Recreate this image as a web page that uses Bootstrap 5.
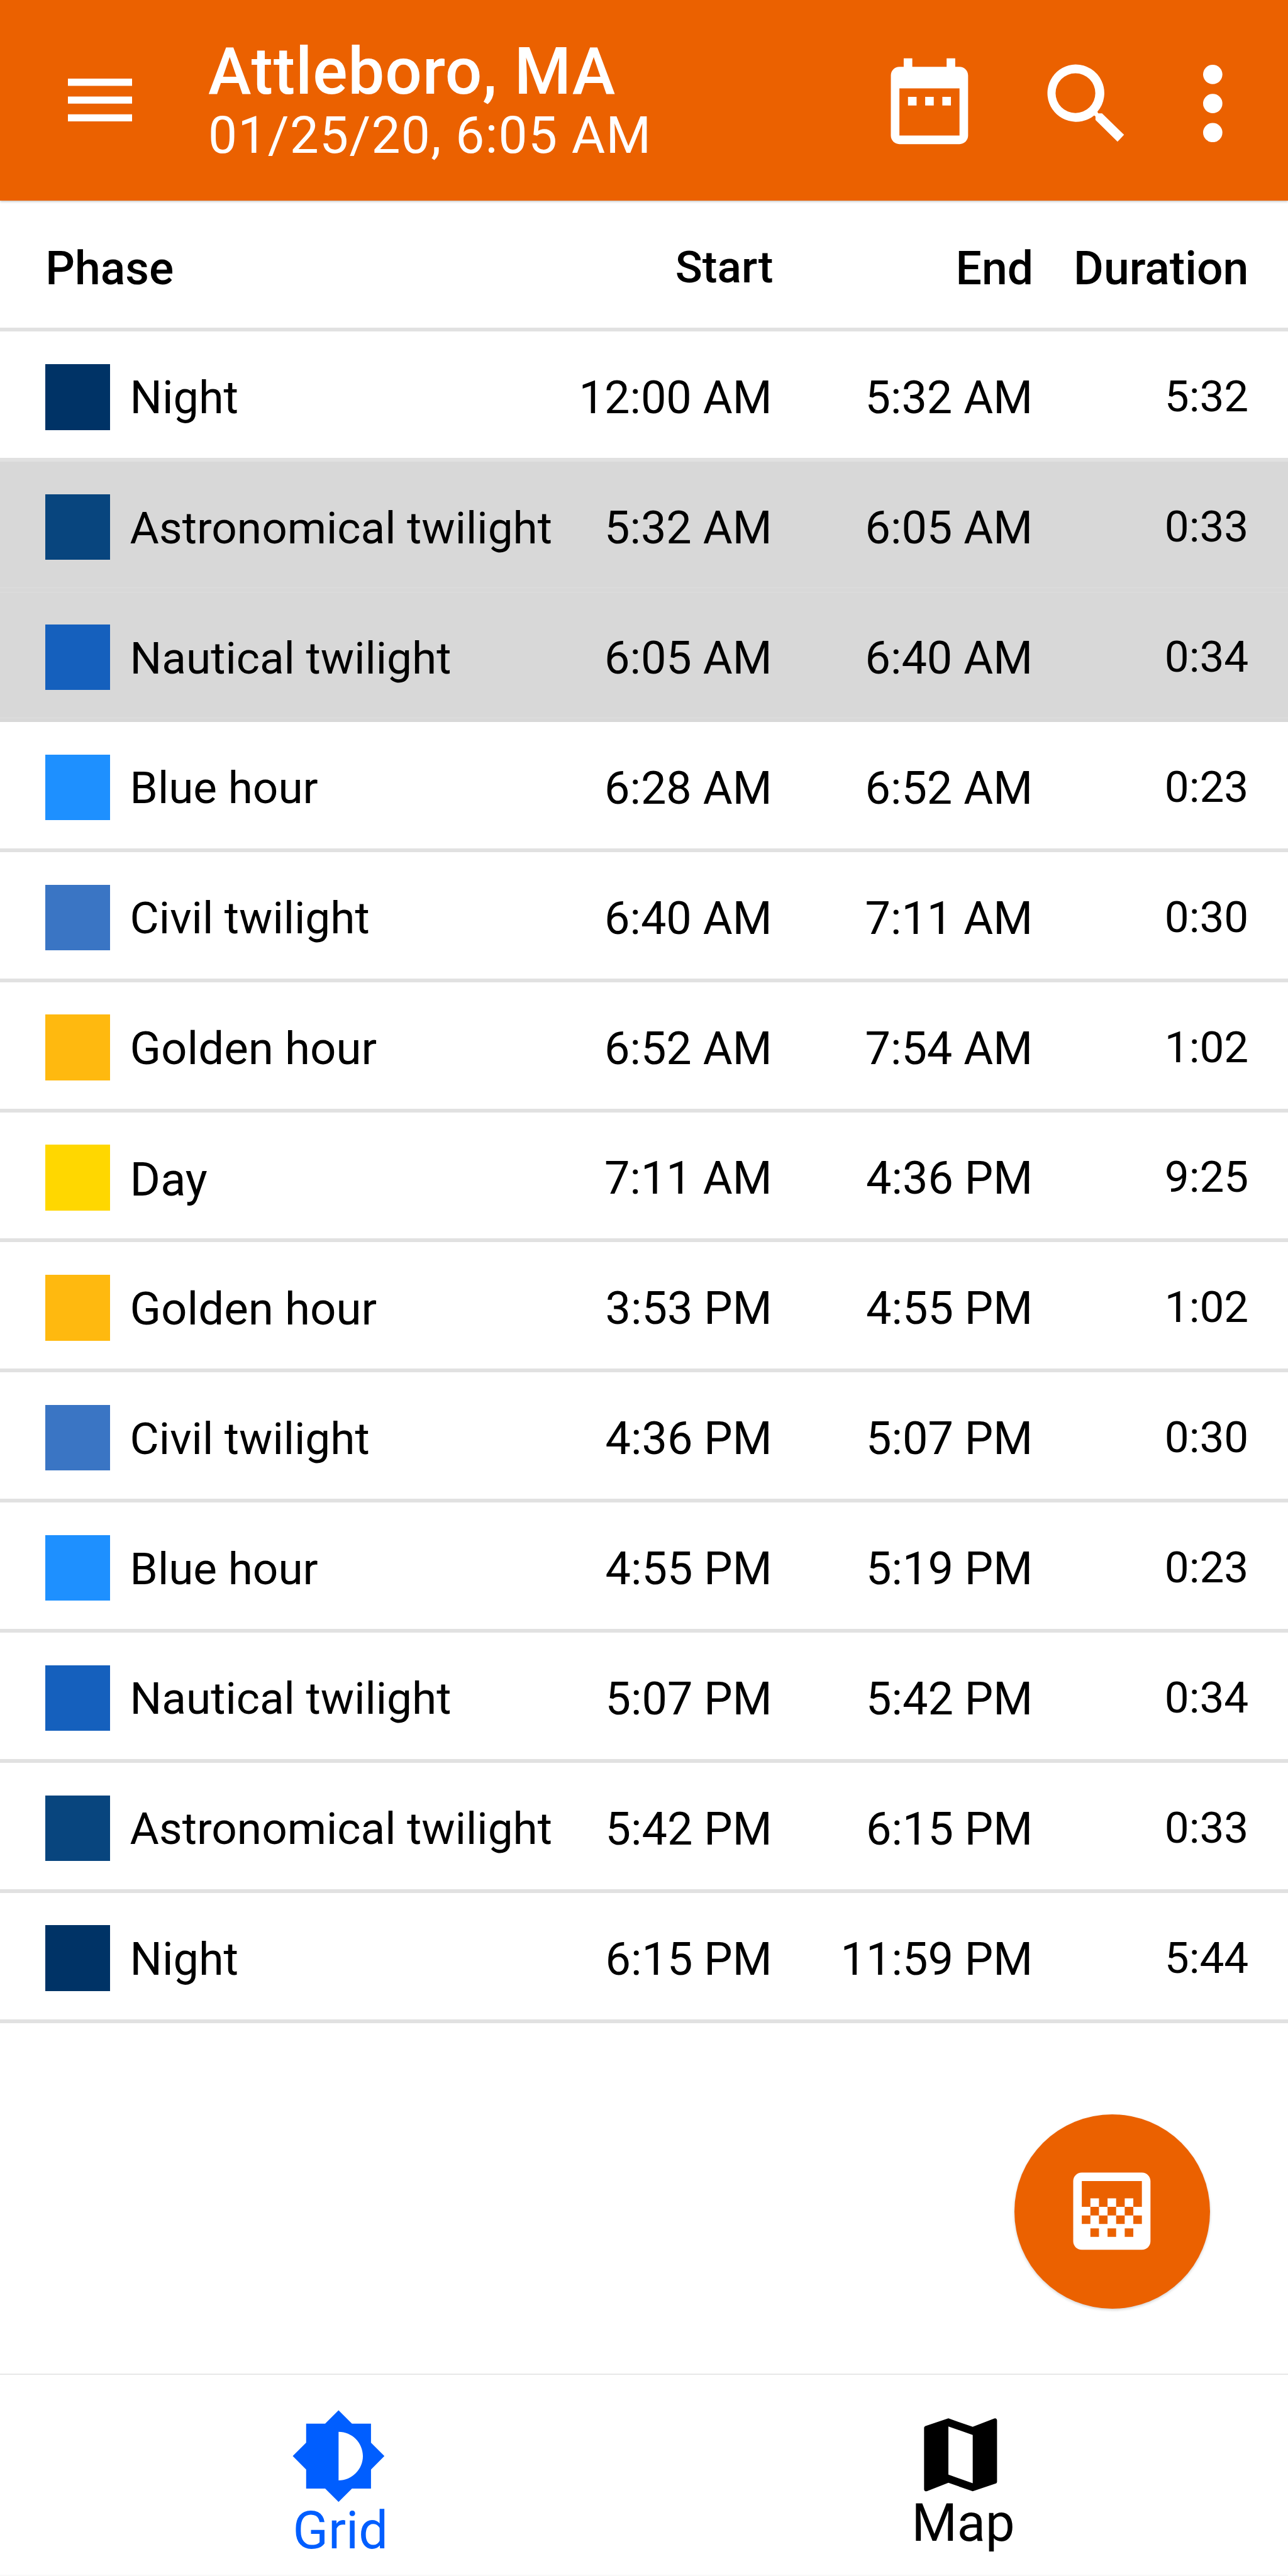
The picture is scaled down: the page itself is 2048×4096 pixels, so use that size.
<!DOCTYPE html>
<html lang="en">
<head>
<meta charset="utf-8">
<meta name="viewport" content="width=device-width, initial-scale=1">
<title>Attleboro, MA</title>
<link href="https://cdn.jsdelivr.net/npm/bootstrap@5.3.0/dist/css/bootstrap.min.css" rel="stylesheet">
<style>
  body { font-family: Roboto, "Noto Sans", sans-serif; color: #000; background: #fff; overflow: hidden; }
  .screen { width: 2048px; height: 4096px; }
  svg { display: block; flex: none; fill: currentColor; }

  /* App bar */
  .appbar { height: 318.6px; padding: 4px 104.2px 0 108px; background: #eb6100; box-shadow: 0 1px 4px rgba(0,0,0,.3); position: relative; }
  .menu-btn { width: 223px; padding-bottom: 4px; }
  .place { font-size: 103.3px; font-weight: 500; line-height: 107px; letter-spacing: .85px; }
  .moment { font-size: 82px; line-height: 96.5px; letter-spacing: 1.25px; }
  .find-btn { margin-left: 84.5px; padding-top: 6px; }
  .more-btn { margin-left: 105px; padding-top: 7px; }

  /* Phase list */
  .phase-row { height: 206.87px; padding: 7px 62.7px 0 72.3px; border-bottom: 6px solid #e1e1e1; font-size: 72px; line-height: 84px; white-space: nowrap; }
  .phase-head { height: 208.8px; padding-top: 14px; font-size: 73.3px; font-weight: 500; }
  .phase-now { background: #d8d8d8; border-bottom-color: #d8d8d8; box-shadow: inset 0 -1px #dedede; }
  .phase-now + .phase-now { box-shadow: inset 0 1px #dedede, inset 0 -1px #dedede; }
  .swatch { width: 103px; height: 104.5px; margin-right: 31.3px; flex: none; }
  .c-name, .c-start, .c-end { padding-top: 4px; }
  .c-start { width: 350px; padding-right: 2px; }
  .c-end { width: 413.5px; padding-right: 1px; }
  .c-dur { width: 342.3px; font-size: 69.3px; }
  .phase-head > div { padding-top: 0; }
  .phase-head .c-start { font-size: 71.2px; padding: 0 0 3px; }
  .phase-head .c-end { padding-right: 0; }
  .phase-head .c-dur { font-size: 73.3px; }
  .name-tight { font-size: 71.1px; padding-top: 3px; }
  .name-wide { font-size: 72.7px; padding-top: 5px; }
  .name-day { font-size: 74px; padding-top: 7.5px; }
  .night { background: #003366; }
  .astro { background: #08457e; }
  .nautical { background: #1560bd; }
  .bluehour { background: #1e90ff; }
  .civil { background: #3a75c4; }
  .golden { background: #ffb90f; }
  .day { background: #ffd700; }

  /* Floating button */
  .fab-area { padding: 145.4px 123.7px 0 0; }
  .fab { width: 311.5px; height: 309.2px; background: #eb6100; box-shadow: 0 2px 4px rgba(0,0,0,.18); padding: 0 1px 1px 0; }

  /* Bottom tabs */
  .tabs { height: 321.4px; border-top: 1px solid #e2e2e2; border-bottom: 2px solid #f9f9f9; box-shadow: 0 -1px 1px rgba(0,0,0,.06); font-size: 83px; }
  .tab-grid { color: #005eff; padding: 52.1px 0 0 53px; }
  .tab-grid span { line-height: 84px; margin-left: 5.5px; }
  .tab-map { padding: 50.2px 18px 0 0; }
  .tab-map span { line-height: 63.4px; margin-left: 9px; }
</style>
</head>
<body>
<div class="screen d-flex flex-column">
  <header class="appbar d-flex align-items-center text-white flex-shrink-0">
    <div class="menu-btn"><svg width="102.2" height="68.2" viewBox="64 128 384 256"><path d="M64 384h384v-42.7H64V384zm0-106.7h384v-42.6H64v42.6zM64 128v42.7h384V128H64z"/></svg></div>
    <div class="flex-grow-1">
      <div class="place">Attleboro, MA</div>
      <div class="moment">01/25/20, 6:05 AM</div>
    </div>
    <div><svg width="163.8" height="163.8" viewBox="0 0 24 24"><path d="M9 11H7v2h2v-2zm4 0h-2v2h2v-2zm4 0h-2v2h2v-2zm2-7h-1V2h-2v2H8V2H6v2H5c-1.11 0-1.99.9-1.99 2L3 20c0 1.1.89 2 2 2h14c1.1 0 2-.9 2-2V6c0-1.1-.9-2-2-2zm0 16H5V9h14v11z"/></svg></div>
    <div class="find-btn"><svg width="163.8" height="163.8" viewBox="0 0 512 512"><path fill-rule="evenodd" d="M206.4 64a142.6 142.6 0 0 1 109 235.5L320 307h18.5L448 413.5 415.5 448 306 340v-17.5l-6-5.5A142.6 142.6 0 1 1 206.4 64zm0 44a98.8 98.8 0 1 0 0 197.6 98.8 98.8 0 0 0 0-197.6z"/></svg></div>
    <div class="more-btn"><svg width="30.7" height="123.2" viewBox="0 0 30.7 123.2"><circle cx="15.35" cy="15.35" r="15.35"/><circle cx="15.35" cy="61.6" r="15.35"/><circle cx="15.35" cy="107.85" r="15.35"/></svg></div>
  </header>

  <main class="flex-grow-1 d-flex flex-column">
    <div class="phase-row phase-head d-flex align-items-center"><div class="flex-grow-1">Phase</div><div class="c-start text-end">Start</div><div class="c-end text-end">End</div><div class="c-dur text-end">Duration</div></div>
    <div class="phase-row d-flex align-items-center"><i class="swatch night"></i><div class="c-name flex-grow-1">Night</div><div class="c-start text-end">12:00 AM</div><div class="c-end text-end">5:32 AM</div><div class="c-dur text-end">5:32</div></div>
    <div class="phase-row phase-now d-flex align-items-center"><i class="swatch astro"></i><div class="c-name name-tight flex-grow-1">Astronomical twilight</div><div class="c-start text-end">5:32 AM</div><div class="c-end text-end">6:05 AM</div><div class="c-dur text-end">0:33</div></div>
    <div class="phase-row phase-now d-flex align-items-center"><i class="swatch nautical"></i><div class="c-name name-tight flex-grow-1">Nautical twilight</div><div class="c-start text-end">6:05 AM</div><div class="c-end text-end">6:40 AM</div><div class="c-dur text-end">0:34</div></div>
    <div class="phase-row d-flex align-items-center"><i class="swatch bluehour"></i><div class="c-name name-tight flex-grow-1">Blue hour</div><div class="c-start text-end">6:28 AM</div><div class="c-end text-end">6:52 AM</div><div class="c-dur text-end">0:23</div></div>
    <div class="phase-row d-flex align-items-center"><i class="swatch civil"></i><div class="c-name name-tight flex-grow-1">Civil twilight</div><div class="c-start text-end">6:40 AM</div><div class="c-end text-end">7:11 AM</div><div class="c-dur text-end">0:30</div></div>
    <div class="phase-row d-flex align-items-center"><i class="swatch golden"></i><div class="c-name name-wide flex-grow-1">Golden hour</div><div class="c-start text-end">6:52 AM</div><div class="c-end text-end">7:54 AM</div><div class="c-dur text-end">1:02</div></div>
    <div class="phase-row d-flex align-items-center"><i class="swatch day"></i><div class="c-name name-day flex-grow-1">Day</div><div class="c-start text-end">7:11 AM</div><div class="c-end text-end">4:36 PM</div><div class="c-dur text-end">9:25</div></div>
    <div class="phase-row d-flex align-items-center"><i class="swatch golden"></i><div class="c-name name-wide flex-grow-1">Golden hour</div><div class="c-start text-end">3:53 PM</div><div class="c-end text-end">4:55 PM</div><div class="c-dur text-end">1:02</div></div>
    <div class="phase-row d-flex align-items-center"><i class="swatch civil"></i><div class="c-name name-tight flex-grow-1">Civil twilight</div><div class="c-start text-end">4:36 PM</div><div class="c-end text-end">5:07 PM</div><div class="c-dur text-end">0:30</div></div>
    <div class="phase-row d-flex align-items-center"><i class="swatch bluehour"></i><div class="c-name name-tight flex-grow-1">Blue hour</div><div class="c-start text-end">4:55 PM</div><div class="c-end text-end">5:19 PM</div><div class="c-dur text-end">0:23</div></div>
    <div class="phase-row d-flex align-items-center"><i class="swatch nautical"></i><div class="c-name name-tight flex-grow-1">Nautical twilight</div><div class="c-start text-end">5:07 PM</div><div class="c-end text-end">5:42 PM</div><div class="c-dur text-end">0:34</div></div>
    <div class="phase-row d-flex align-items-center"><i class="swatch astro"></i><div class="c-name name-tight flex-grow-1">Astronomical twilight</div><div class="c-start text-end">5:42 PM</div><div class="c-end text-end">6:15 PM</div><div class="c-dur text-end">0:33</div></div>
    <div class="phase-row d-flex align-items-center"><i class="swatch night"></i><div class="c-name flex-grow-1">Night</div><div class="c-start text-end">6:15 PM</div><div class="c-end text-end">11:59 PM</div><div class="c-dur text-end">5:44</div></div>
    <div class="fab-area d-flex justify-content-end">
      <div class="fab rounded-circle d-flex align-items-center justify-content-center text-white"><svg width="163.8" height="163.8" viewBox="0 0 24 24"><path d="M11 9h2v2h-2zm-2 2h2v2H9zm4 0h2v2h-2zm2-2h2v2h-2zM7 9h2v2H7zm12-6H5c-1.1 0-2 .9-2 2v14c0 1.1.9 2 2 2h14c1.1 0 2-.9 2-2V5c0-1.1-.9-2-2-2zM9 18H7v-2h2v2zm4 0h-2v-2h2v2zm4 0h-2v-2h2v2zm2-7h-2v2h2v2h-2v-2h-2v2h-2v-2h-2v2H9v-2H7v2H5v-2h2v-2H5V5h14v6z"/></svg></div>
    </div>
  </main>

  <nav class="tabs d-flex flex-shrink-0">
    <div class="tab-grid w-50 d-flex flex-column align-items-center"><svg width="154.7" height="154.7" viewBox="0 0 24 24"><path d="M20 15.31L23.31 12 20 8.69V4h-4.69L12 .69 8.69 4H4v4.69L.69 12 4 15.31V20h4.69L12 23.31 15.31 20H20v-4.69zM12 18V6c3.31 0 6 2.69 6 6s-2.69 6-6 6z"/></svg><span>Grid</span></div>
    <div class="tab-map w-50 d-flex flex-column align-items-center"><svg width="154.7" height="154.7" viewBox="0 0 24 24"><path d="M20.5 3l-.16.03L15 5.1 9 3 3.36 4.9c-.21.07-.36.25-.36.48V20.5c0 .28.22.5.5.5l.16-.03L9 18.9l6 2.1 5.64-1.9c.21-.07.36-.25.36-.48V3.5c0-.28-.22-.5-.5-.5zM15 19l-6-2.11V5l6 2.11V19z"/></svg><span>Map</span></div>
  </nav>
</div>
<script src="https://cdn.jsdelivr.net/npm/bootstrap@5.3.0/dist/js/bootstrap.bundle.min.js"></script>
</body>
</html>
